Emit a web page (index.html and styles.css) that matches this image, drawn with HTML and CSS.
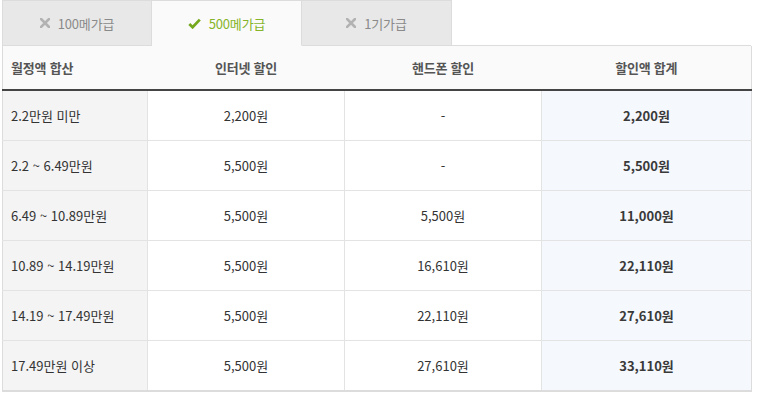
FILE: index.html
```html
<!DOCTYPE html>
<html lang="ko">
<head>
<meta charset="utf-8">
<link rel="stylesheet" href="styles.css">
</head>
<body>
<div class="wrap">
  <div class="tabs">
    <div class="tab"><svg class="ico" width="10" height="10" viewBox="0 0 10 10"><path d="M1 1L9 9M9 1L1 9" stroke="#b2b2b2" stroke-width="2.6" stroke-linecap="square" fill="none"/></svg>100메가급</div>
    <div class="tab active"><svg class="ico" width="13" height="11" viewBox="0 0 13 11"><path d="M1.3 6L4.6 9.2L11.8 1.6" stroke="#76a81e" stroke-width="2.8" fill="none"/></svg>500메가급</div>
    <div class="tab"><svg class="ico" width="10" height="10" viewBox="0 0 10 10"><path d="M1 1L9 9M9 1L1 9" stroke="#b2b2b2" stroke-width="2.6" stroke-linecap="square" fill="none"/></svg>1기가급</div>
    <div class="fill"></div>
  </div>
  <table class="grid">
    <colgroup>
      <col class="c1"><col class="c2"><col class="c3"><col class="c4">
    </colgroup>
    <thead>
      <tr><th class="first">월정액 합산</th><th>인터넷 할인</th><th>핸드폰 할인</th><th>할인액 합계</th></tr>
    </thead>
    <tbody>
      <tr><td class="first">2.2만원 미만</td><td>2,200원</td><td>-</td><td class="sum">2,200원</td></tr>
      <tr><td class="first">2.2 ~ 6.49만원</td><td>5,500원</td><td>-</td><td class="sum">5,500원</td></tr>
      <tr><td class="first">6.49 ~ 10.89만원</td><td>5,500원</td><td>5,500원</td><td class="sum">11,000원</td></tr>
      <tr><td class="first">10.89 ~ 14.19만원</td><td>5,500원</td><td>16,610원</td><td class="sum">22,110원</td></tr>
      <tr><td class="first">14.19 ~ 17.49만원</td><td>5,500원</td><td>22,110원</td><td class="sum">27,610원</td></tr>
      <tr class="last"><td class="first">17.49만원 이상</td><td>5,500원</td><td>27,610원</td><td class="sum">33,110원</td></tr>
    </tbody>
  </table>
</div>
</body>
</html>
```

FILE: styles.css
```css
html, body { margin: 0; padding: 0; background: #fff; }
body { font-family: "Noto Sans CJK KR", "Noto Sans", sans-serif; font-size: 13px; color: #333; }
.wrap { margin-left: 2px; width: 749px; }
.tabs { display: flex; height: 46px; }
.tab {
  box-sizing: border-box;
  width: 150px; height: 46px;
  background: #e8e8e8;
  border: 1px solid #dcdcdc;
  border-left: none;
  display: flex; align-items: center; justify-content: center;
  color: #8a8a8a; font-size: 13px; letter-spacing: -0.2px;
}
.tab:first-child { border-left: 1px solid #dcdcdc; }
.tab.active { background: #fafafa; border-bottom-color: #fafafa; color: #86b52a; }
.ico { display: block; margin-right: 8px; }
.fill { flex: 1; border-bottom: 1px solid #dcdcdc; }
.grid {
  width: 749px; table-layout: fixed; border-collapse: collapse;
  border-left: 1px solid #dcdcdc; border-right: 1px solid #dcdcdc;
  border-bottom: 2px solid #dcdcdc;
}
.c1 { width: 145px; } .c2 { width: 197px; } .c3 { width: 197px; } .c4 { width: 210px; }
th {
  height: 43px; background: #fafafa; color: #555; font-weight: bold; font-size: 13px;
  border-bottom: 2px solid #444; text-align: center; padding: 0; letter-spacing: -0.2px;
}
th.first, td.first { text-align: left; padding-left: 8px; }
td {
  height: 49px; padding: 0; text-align: center; font-size: 13px; color: #333;
  border-bottom: 1px solid #e3e3e3; border-left: 1px solid #e3e3e3;
}
td.first { background: #f4f4f4; border-left: none; }
td.sum { background: #f5f8fd; font-weight: bold; color: #3a3a3a; }
tr.last td { border-bottom: none; }
```
